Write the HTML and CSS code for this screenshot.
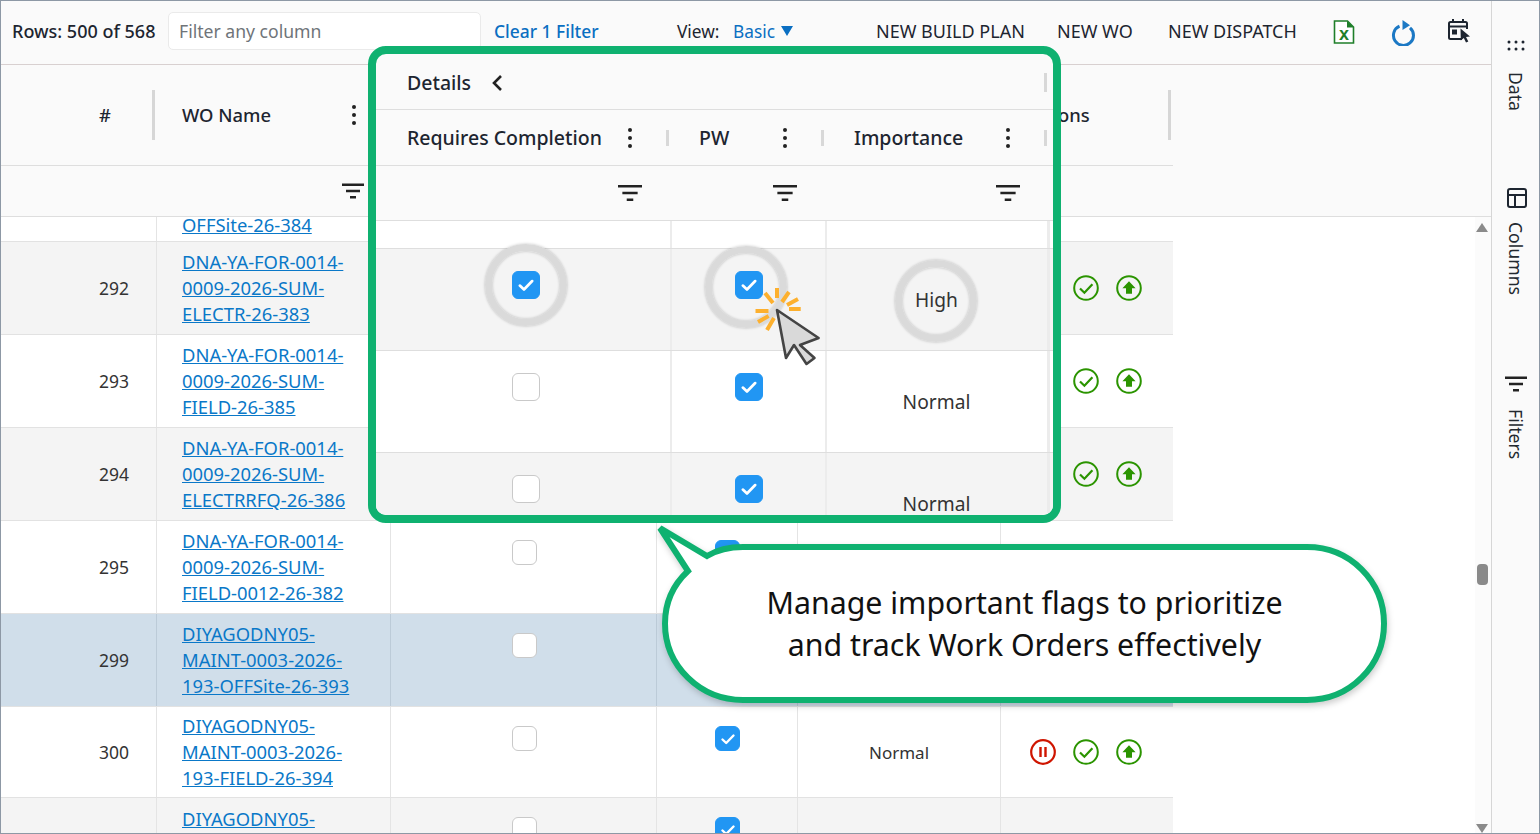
FILE: index.html
```html
<!DOCTYPE html>
<html lang="en">
<head>
  <meta charset="UTF-8">
  <title>Work Orders</title>
  <link rel="stylesheet" href="styles.css">
</head>
<body>
  <svg class="sprites" width="0" height="0">
    <symbol id="i-kebab" viewBox="0 0 6 22"><circle cx="3" cy="3" r="2"/><circle cx="3" cy="11" r="2"/><circle cx="3" cy="19" r="2"/></symbol>
    <symbol id="i-filter" viewBox="0 0 22 16"><path d="M0 0.6h22v2.400H0zM4 6.800h14v2.400H4zM8 13h6v2.400H8z"/></symbol>
    <symbol id="i-tick" viewBox="0 0 16 16"><path d="M2.500 8.500l3.700 3.500 7.300-7.500" fill="none" stroke="#fff" stroke-width="2.400" stroke-linecap="round" stroke-linejoin="round"/></symbol>
    <symbol id="i-done" viewBox="0 0 26 26"><circle cx="13" cy="13" r="11.800" fill="none" stroke="#2b9400" stroke-width="2"/><path d="M7 13.500l4.400 4.300 8-8.600" fill="none" stroke="#2b9400" stroke-width="2.200"/></symbol>
    <symbol id="i-up" viewBox="0 0 26 26"><circle cx="13" cy="13" r="11.800" fill="none" stroke="#2b9400" stroke-width="2"/><path d="M13 6.200l6.600 7h-3.600v5.600h-6v-5.600H6.400z" fill="#2b9400"/></symbol>
    <symbol id="i-pause" viewBox="0 0 26 26"><circle cx="13" cy="13" r="11.800" fill="none" stroke="#cf1500" stroke-width="2.200"/><path d="M9.300 8h2.400v10H9.300zM14.300 8h2.400v10h-2.400z" fill="#cf1500"/></symbol>
  </svg>

  <div class="app">
    <div class="main">
      <div class="toolbar">
        <span class="row-count">Rows: 500 of 568</span>
        <input class="search" type="text" placeholder="Filter any column">
        <a class="clear-link">Clear 1 Filter</a>
        <span class="view-label">View:</span>
        <span class="view-value">Basic</span>
        <span class="caret"></span>
        <span class="action action-plan">NEW BUILD PLAN</span>
        <span class="action action-wo">NEW WO</span>
        <span class="action action-dispatch">NEW DISPATCH</span>
        <svg class="tool tool-excel" width="22" height="24" viewBox="0 0 22 24">
          <path d="M1.500 1h13l6 6v16h-19z" fill="#fff" stroke="#1f7f2a" stroke-width="1.600"/>
          <path d="M14 1v6.500h7z" fill="#1f7f2a"/>
          <text x="11" y="20" text-anchor="middle" class="excel-x">x</text>
        </svg>
        <svg class="tool tool-refresh" width="24" height="26" viewBox="0 0 24 26">
          <path d="M8.500 6.200A10 10 0 1 0 19 7.800" fill="none" stroke="#1b78c4" stroke-width="3"/>
          <path d="M11.500 0l7.500 5.300-7.500 4.700z" fill="#1b78c4"/>
        </svg>
        <svg class="tool tool-plan" width="24" height="26" viewBox="0 0 24 26">
          <path d="M6 1v4M16 1v4" stroke="#1d2530" stroke-width="2"/>
          <path d="M15 21H3.500A1.500 1.500 0 0 1 2 19.500V5.500A1.500 1.500 0 0 1 3.500 4h15A1.500 1.500 0 0 1 20 5.500V11" fill="none" stroke="#1d2530" stroke-width="2"/>
          <path d="M2 8.500h18" stroke="#1d2530" stroke-width="2"/>
          <rect x="5" y="11.500" width="5" height="5" fill="#1d2530"/>
          <path d="M13.500 10.500l9.500 8-4 .5 2.300 4.500-2.300 1-2.200-4.500-3 2.500z" fill="#1d2530"/>
        </svg>
      </div>

      <div class="head">
        <div class="grid head-row">
          <div class="hcell hcell-num">#<span class="sep"></span></div>
          <div class="hcell hcell-name">WO Name<svg class="kebab"><use href="#i-kebab"/></svg></div>
          <div class="hcell"></div>
          <div class="hcell"></div>
          <div class="hcell"></div>
          <div class="hcell hcell-actions">Actions<span class="sep"></span></div>
        </div>
        <div class="grid filter-row">
          <div></div>
          <div class="filter-cell"><svg class="filter"><use href="#i-filter"/></svg></div>
        </div>
      </div>

      <div class="body">
        <div class="rows">
          <div class="grid row row-top">
            <div class="cell"></div>
            <div class="cell cell-name"><a>OFFSite-26-384</a></div>
            <div class="cell"></div><div class="cell"></div><div class="cell"></div><div class="cell"></div>
          </div>
          <div class="grid row alt">
            <div class="cell cell-num">292</div>
            <div class="cell cell-name"><a>DNA-YA-FOR-0014-<br>0009-2026-SUM-<br>ELECTR-26-383</a></div>
            <div class="cell"></div><div class="cell"></div><div class="cell"></div>
            <div class="cell cell-actions"><svg class="act"><use href="#i-done"/></svg><svg class="act"><use href="#i-up"/></svg></div>
          </div>
          <div class="grid row">
            <div class="cell cell-num">293</div>
            <div class="cell cell-name"><a>DNA-YA-FOR-0014-<br>0009-2026-SUM-<br>FIELD-26-385</a></div>
            <div class="cell"></div><div class="cell"></div><div class="cell"></div>
            <div class="cell cell-actions"><svg class="act"><use href="#i-done"/></svg><svg class="act"><use href="#i-up"/></svg></div>
          </div>
          <div class="grid row alt">
            <div class="cell cell-num">294</div>
            <div class="cell cell-name"><a>DNA-YA-FOR-0014-<br>0009-2026-SUM-<br>ELECTRRFQ-26-386</a></div>
            <div class="cell"></div><div class="cell"></div><div class="cell"></div>
            <div class="cell cell-actions"><svg class="act"><use href="#i-done"/></svg><svg class="act"><use href="#i-up"/></svg></div>
          </div>
          <div class="grid row">
            <div class="cell cell-num">295</div>
            <div class="cell cell-name"><a>DNA-YA-FOR-0014-<br>0009-2026-SUM-<br>FIELD-0012-26-382</a></div>
            <div class="cell cell-box"><span class="cb"></span></div>
            <div class="cell cell-box"><span class="cb on"><svg><use href="#i-tick"/></svg></span></div>
            <div class="cell"></div><div class="cell"></div>
          </div>
          <div class="grid row selected">
            <div class="cell cell-num">299</div>
            <div class="cell cell-name"><a>DIYAGODNY05-<br>MAINT-0003-2026-<br>193-OFFSite-26-393</a></div>
            <div class="cell cell-box"><span class="cb"></span></div>
            <div class="cell"></div><div class="cell"></div><div class="cell"></div>
          </div>
          <div class="grid row row-short">
            <div class="cell cell-num">300</div>
            <div class="cell cell-name"><a>DIYAGODNY05-<br>MAINT-0003-2026-<br>193-FIELD-26-394</a></div>
            <div class="cell cell-box"><span class="cb"></span></div>
            <div class="cell cell-box"><span class="cb on"><svg><use href="#i-tick"/></svg></span></div>
            <div class="cell cell-text">Normal</div>
            <div class="cell cell-actions"><svg class="act"><use href="#i-pause"/></svg><svg class="act"><use href="#i-done"/></svg><svg class="act"><use href="#i-up"/></svg></div>
          </div>
          <div class="grid row alt row-last">
            <div class="cell"></div>
            <div class="cell cell-name"><a>DIYAGODNY05-</a></div>
            <div class="cell cell-box"><span class="cb"></span></div>
            <div class="cell cell-box"><span class="cb on"><svg><use href="#i-tick"/></svg></span></div>
            <div class="cell"></div><div class="cell"></div>
          </div>
        </div>
        <div class="scrollbar">
          <span class="arrow-up"></span>
          <span class="thumb"></span>
          <span class="arrow-down"></span>
        </div>
      </div>
    </div>

    <div class="sidebar">
      <div class="tab tab-data">
        <svg width="20" height="11" viewBox="0 0 20 11"><g fill="#1d2530"><circle cx="3" cy="2" r="1.500"/><circle cx="10" cy="2" r="1.500"/><circle cx="17" cy="2" r="1.500"/><circle cx="3" cy="9" r="1.500"/><circle cx="10" cy="9" r="1.500"/><circle cx="17" cy="9" r="1.500"/></g></svg>
        <span>Data</span>
      </div>
      <div class="tab tab-columns">
        <svg class="columns-icon" width="22" height="22" viewBox="0 0 22 22"><rect x="2" y="2" width="18" height="18" rx="2" fill="none" stroke="#1d2530" stroke-width="2"/><path d="M2 8h18M9 8v12" stroke="#1d2530" stroke-width="2"/></svg>
        <span>Columns</span>
      </div>
      <div class="tab tab-filters">
        <svg class="filter"><use href="#i-filter"/></svg>
        <span>Filters</span>
      </div>
    </div>
  </div>

  <!-- zoomed detail panel -->
  <div class="panel">
    <div class="p-title">Details
      <svg class="chevron" width="12" height="18" viewBox="0 0 12 18"><path d="M10 2L3 9l7 7" fill="none" stroke="#222" stroke-width="2.600"/></svg>
      <span class="p-sep"></span>
    </div>
    <div class="p-grid p-head">
      <div class="p-hcell">Requires Completion<svg class="kebab"><use href="#i-kebab"/></svg><span class="p-sep"></span></div>
      <div class="p-hcell p-hcell-next">PW<svg class="kebab"><use href="#i-kebab"/></svg><span class="p-sep"></span></div>
      <div class="p-hcell p-hcell-next">Importance<svg class="kebab"><use href="#i-kebab"/></svg><span class="p-sep"></span></div>
    </div>
    <div class="p-grid p-filters">
      <div class="p-fcell"><svg class="filter"><use href="#i-filter"/></svg></div>
      <div class="p-fcell"><svg class="filter"><use href="#i-filter"/></svg></div>
      <div class="p-fcell"><svg class="filter"><use href="#i-filter"/></svg></div>
    </div>
    <div class="p-grid p-row p-gap"><div></div><div></div><div></div></div>
    <div class="p-grid p-row p-alt">
      <div class="p-cell p-cell-req"><span class="cb big on ring"><svg><use href="#i-tick"/></svg></span></div>
      <div class="p-cell"><span class="cb big on ring ring-pw"><svg><use href="#i-tick"/></svg></span></div>
      <div class="p-cell p-text"><span class="ring-text">High</span></div>
    </div>
    <div class="p-grid p-row">
      <div class="p-cell p-cell-req"><span class="cb big"></span></div>
      <div class="p-cell"><span class="cb big on"><svg><use href="#i-tick"/></svg></span></div>
      <div class="p-cell p-text">Normal</div>
    </div>
    <div class="p-grid p-row p-alt">
      <div class="p-cell p-cell-req"><span class="cb big"></span></div>
      <div class="p-cell"><span class="cb big on"><svg><use href="#i-tick"/></svg></span></div>
      <div class="p-cell p-text">Normal</div>
    </div>
  </div>

  <!-- pointer with click burst -->
  <svg class="pointer" width="75" height="85" viewBox="0 0 75 85">
    <g stroke="#fdb02e" stroke-width="4">
      <path d="M5.500 26h13M27 3v10M15 8l8 10M39 7l-7 10M48 14l-11 6M39 24h11.700M8 37l10.600-6M17 45l7-12"/>
    </g>
    <path d="M27 25l41.600 28-18.600 7 14.500 13-8 6-12.500-19-8 13z" fill="#d9d9d9" stroke="#444" stroke-width="2.600" stroke-linejoin="round"/>
  </svg>

  <!-- callout -->
  <div class="callout">
    <svg class="callout-shape" width="740" height="190" viewBox="0 0 740 190">
      <path d="M5 6L52 34C62 28 74 25 88 25H652C695 25 729 59 729 101.500C729 144 695 178 652 178H88C45 178 10 144 10 101.500C10 80 19 62 33 49Z" fill="#fff" stroke="#0fb170" stroke-width="6"/>
    </svg>
    <p class="callout-text">Manage important flags to prioritize<br>and track Work Orders effectively</p>
  </div>
</body>
</html>
```

FILE: styles.css
```css
* {
  box-sizing: border-box;
  margin: 0;
  padding: 0;
}

body {
  font-family: "Noto Sans", "Open Sans", sans-serif;
  font-size: 17px;
  color: #222;
  background-color: #fff;
  width: 1540px;
  height: 834px;
  overflow: hidden;
  position: relative;
}

.sprites {
  position: absolute;
}

.app {
  display: flex;
  width: 1540px;
  height: 834px;
  border: 1px solid #8d98a5;
}

.main {
  width: 1490px;
  display: flex;
  flex-direction: column;
}

/* toolbar */
.toolbar {
  display: flex;
  align-items: center;
  height: 64px;
  flex: none;
  padding-left: 11px;
  padding-bottom: 3px;
  background-color: #fafafa;
  border-bottom: 1px solid #d8d0d0;
  color: #1d2530;
}

.row-count {
  font-weight: 500;
  font-size: 18px;
  width: 156px;
  white-space: nowrap;
}

.search {
  width: 313px;
  height: 38px;
  padding-left: 10px;
  border: 1px solid #eaeaea;
  border-radius: 5px;
  background-color: #fff;
  font-family: inherit;
  font-size: 17.6px;
}

.search::placeholder {
  color: #6f7479;
  opacity: 1;
}

.clear-link {
  margin-left: 13px;
  width: 183px;
  color: #0a6fc2;
  font-weight: 500;
  font-size: 17.4px;
  white-space: nowrap;
}

.view-label {
  width: 56px;
  font-size: 17.3px;
}

.view-value {
  color: #0a6fc2;
  font-size: 17.3px;
  width: 48px;
}

.caret {
  border-left: 6px solid transparent;
  border-right: 6px solid transparent;
  border-top: 10px solid #0a6fc2;
  margin-right: 83px;
}

.action {
  white-space: nowrap;
  font-size: 18px;
}

.action-plan { width: 181px; }
.action-wo { width: 111px; }
.action-dispatch { width: 165px; }

.tool { flex: none; }
.tool-excel { margin-top: 2px; }
.tool-refresh { margin-left: 36px; margin-top: 3px; }
.tool-plan { margin-left: 32px; }

.excel-x {
  font-family: "Liberation Sans", sans-serif;
  font-weight: 700;
  font-size: 18px;
  fill: #1f7f2a;
}

/* grid */
.grid {
  display: grid;
  grid-template-columns: 156px 234px 266px 141px 203px 172px;
  width: 1172px;
}

.head {
  flex: none;
  height: 152px;
  background-color: #fafafa;
  border-bottom: 1px solid #dedede;
}

.head-row {
  height: 101px;
  border-bottom: 1px solid #dedede;
}

.hcell {
  display: flex;
  align-items: center;
  position: relative;
  font-size: 18.4px;
  font-weight: 500;
  padding-bottom: 1px;
  color: #1d2530;
}

.hcell-num {
  justify-content: flex-end;
  padding-right: 46px;
}

.hcell-name {
  padding-left: 25px;
}

.hcell-name .kebab {
  margin-left: auto;
  margin-right: 34px;
}

.hcell-actions {
  padding-left: 24px;
}

.sep {
  position: absolute;
  right: 2px;
  top: 25px;
  width: 3px;
  height: 50px;
  background-color: #d6d6d6;
}

.kebab {
  width: 6px;
  height: 22px;
  fill: #222;
  flex: none;
}

.filter {
  width: 22px;
  height: 16px;
  fill: #222;
  flex: none;
}

.filter-row {
  height: 50px;
}

.filter-cell {
  display: flex;
  align-items: center;
  justify-content: flex-end;
  padding-right: 27px;
}

/* rows */
.body {
  flex: 1;
  display: flex;
  justify-content: space-between;
  background-color: #fff;
}

.rows {
  width: 1172px;
}

.row {
  height: 93px;
  border-bottom: 1px solid #e2e2e2;
  color: #333;
}

.row-top {
  height: 25px;
}

.row-top .cell {
  overflow: visible;
}

.row-top .cell-name {
  line-height: 16px;
  padding-bottom: 8px;
}

.row-short {
  height: 91px;
}

.row-last {
  height: 35px;
  border-bottom: none;
  overflow: hidden;
}

.row-last .cell-name {
  align-items: flex-start;
  padding-top: 8px;
}

.alt {
  background-color: #f4f4f4;
}

.selected {
  background-color: #d0deea;
}

.selected .cell {
  border-right-color: #bccbd8;
}

.cell {
  display: flex;
  align-items: center;
  border-right: 1px solid #e4e4e4;
  overflow: hidden;
}

.cell:last-child {
  border-right: none;
}

.cell-num {
  justify-content: flex-end;
  padding-right: 27px;
  font-size: 17.5px;
}

.cell-name {
  padding-left: 25px;
  line-height: 26px;
  font-size: 18.4px;
  white-space: nowrap;
}

.cell-name a {
  color: #0a78c8;
  text-decoration: underline;
}

.cell-box {
  justify-content: center;
  align-items: flex-start;
  padding-top: 19px;
  padding-left: 1px;
}

.cell-text {
  justify-content: center;
}

.cell-actions {
  justify-content: flex-end;
  gap: 17px;
  padding-right: 31px;
}

.act {
  width: 26px;
  height: 26px;
  flex: none;
}

.cb {
  display: flex;
  align-items: center;
  justify-content: center;
  width: 25px;
  height: 25px;
  border: 1px solid #c9c9c9;
  border-radius: 6px;
  background-color: #fff;
  flex: none;
}

.cb.on {
  background-color: #2196f3;
  border-color: #2196f3;
}

.cb svg {
  width: 16px;
  height: 16px;
}

.cb.big {
  width: 28px;
  height: 28px;
  position: relative;
}

.cb.big svg {
  width: 18px;
  height: 18px;
}

/* scrollbar */
.scrollbar {
  width: 16px;
  padding-right: 2px;
  display: flex;
  flex-direction: column;
  align-items: center;
  background-color: #fbfbfb;
}

.arrow-up {
  margin-top: 6px;
  border-left: 6px solid transparent;
  border-right: 6px solid transparent;
  border-bottom: 9px solid #8a8a8a;
}

.thumb {
  margin-top: 332px;
  width: 11px;
  height: 21px;
  border-radius: 4px;
  background-color: #8a8a8a;
}

.arrow-down {
  margin-top: auto;
  border-left: 6px solid transparent;
  border-right: 6px solid transparent;
  border-top: 9px solid #8a8a8a;
}

/* right side bar */
.sidebar {
  width: 48px;
  background-color: #fafafa;
  border-left: 1px solid #d6d6d6;
  padding-top: 39px;
}

.tab {
  display: flex;
  flex-direction: column;
  align-items: center;
  color: #23292f;
  font-size: 17.6px;
}

.tab span {
  writing-mode: vertical-rl;
  line-height: 20px;
}

.tab-data {
  height: 147px;
  gap: 21px;
}

.tab-columns {
  height: 189px;
  gap: 13px;
}

.columns-icon {
  margin-left: 2px;
}

.tab-filters {
  gap: 17px;
}

/* detail panel */
.panel {
  position: absolute;
  left: 368px;
  top: 46px;
  width: 693px;
  height: 477px;
  border: 8px solid #0fb170;
  border-radius: 18px;
  background-color: #fafafa;
  overflow: hidden;
  font-size: 19.5px;
  color: #1d2530;
}

.p-title {
  display: flex;
  align-items: center;
  height: 56px;
  padding-left: 31px;
  padding-top: 2px;
  position: relative;
  font-weight: 500;
  border-bottom: 1px solid #dedede;
}

.chevron {
  margin-left: 20px;
}

.p-sep {
  position: absolute;
  right: 6px;
  top: 19px;
  width: 3px;
  height: 19px;
  background-color: #d8d8d8;
}

.p-grid {
  display: grid;
  grid-template-columns: 296px 155px 223px 3px;
}

.p-head {
  height: 56px;
  border-bottom: 1px solid #dedede;
}

.p-hcell {
  display: flex;
  align-items: center;
  justify-content: space-between;
  position: relative;
  padding-left: 31px;
  padding-right: 39px;
  font-weight: 500;
  white-space: nowrap;
}

.p-hcell-next {
  padding-left: 27px;
}

.p-hcell .p-sep {
  right: 3px;
  top: 20px;
  height: 16px;
}

.p-filters {
  height: 55px;
  border-bottom: 1px solid #dedede;
}

.p-fcell {
  display: flex;
  align-items: center;
  justify-content: flex-end;
  padding-right: 30px;
}

.p-fcell .filter {
  width: 24px;
  height: 18px;
}

.p-row {
  height: 102px;
  background-color: #fff;
  border-bottom: 1px solid #dedede;
}

.p-row > div {
  border-right: 2px solid #ececec;
}

.p-row > div:nth-child(3) {
  border-right-width: 3px;
}

.p-gap {
  height: 28px;
}

.p-alt {
  background-color: #f4f4f4;
}

.p-cell {
  display: flex;
  justify-content: center;
  align-items: flex-start;
  padding-top: 22px;
}

.p-cell-req {
  padding-left: 6px;
}

.p-text {
  align-items: center;
  padding-top: 0;
  color: #333;
  font-size: 19.2px;
  padding-right: 1px;
}

.ring::after,
.ring-text::after {
  content: "";
  box-sizing: border-box;
  position: absolute;
  width: 82px;
  height: 82px;
  border-radius: 50%;
  border: 7px solid #dadada;
  box-shadow: 0 0 3px rgba(0, 0, 0, 0.25), inset 0 0 3px rgba(0, 0, 0, 0.25);
}

.ring::after {
  left: -28px;
  top: -28px;
}

.ring-pw::after {
  left: -31px;
  top: -26px;
}

.ring-text {
  position: relative;
}

.ring-text::after {
  left: -20px;
  top: -26px;
}

/* pointer */
.pointer {
  position: absolute;
  left: 750px;
  top: 285px;
}

/* callout */
.callout {
  position: absolute;
  left: 655px;
  top: 522px;
  width: 740px;
  height: 190px;
}

.callout-shape {
  position: absolute;
  left: 0;
  top: 0;
  filter: drop-shadow(1px 3px 3px rgba(0, 0, 0, 0.2));
}

.callout-text {
  position: absolute;
  left: 10px;
  top: 60px;
  width: 719px;
  text-align: center;
  font-size: 30.3px;
  line-height: 42px;
  color: #111;
}
```
